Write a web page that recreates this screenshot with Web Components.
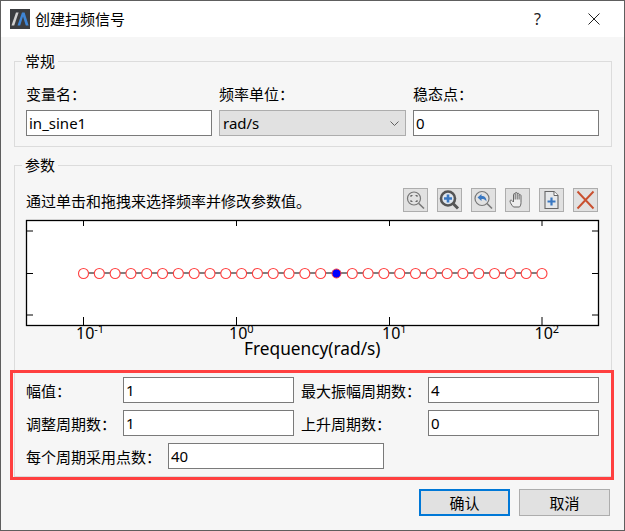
<!DOCTYPE html>
<html lang="zh">
<head>
<meta charset="utf-8">
<title>创建扫频信号</title>
<style>
  html, body { margin: 0; padding: 0; background: #fff; }
  body { font: 15px "Noto Sans", "Noto Sans CJK SC", sans-serif; color: #000; }
</style>
</head>
<body>
<sweep-dialog></sweep-dialog>
<script>
const UI_FONT = '"Noto Sans", "Noto Sans CJK SC", sans-serif';

class TitleBar extends HTMLElement {
  constructor() {
    super();
    this.attachShadow({ mode: 'open' });
  }
  connectedCallback() {
    this.shadowRoot.innerHTML = `
      <style>
        :host { display: flex; align-items: center; height: 36px; background: #fff; padding: 0 24px 0 9px; }
        svg { display: block; flex: none; }
        .name { margin-left: 5px; flex: 1; font-size: 15px; line-height: 20px; }
        .help { font-size: 16px; line-height: 20px; margin-right: 47px; color: #222; }
      </style>
      <svg width="20" height="20" viewBox="0 0 20 20">
        <rect width="20" height="20" fill="#3b3d40"/>
        <path d="M1.5 16.5 L6 3.5 H8.6 L4.2 16.5 Z" fill="#d0d0d0"/>
        <path d="M7.5 16.5 L12 3.5 H14.6 L18.6 16.5 H15.8 L13 7.6 L10.2 16.5 Z" fill="#3f86d6"/>
      </svg>
      <span class="name"><slot></slot></span>
      <span class="help">?</span>
      <svg width="12" height="12" viewBox="0 0 12 12"><path d="M.5 .5 L11.5 11.5 M11.5 .5 L.5 11.5" stroke="#222" stroke-width="1" fill="none"/></svg>
    `;
  }
}
customElements.define('title-bar', TitleBar);

class GroupBox extends HTMLElement {
  constructor() {
    super();
    this.attachShadow({ mode: 'open' });
  }
  connectedCallback() {
    this.shadowRoot.innerHTML = `
      <style>
        :host { display: block; }
        fieldset { margin: 0; border: 1px solid #dcdcdc; padding: 0 12px 0 11px; min-width: 0; }
        legend { margin-left: -4px; padding: 0 3px; font-size: 15px; line-height: 20px; }
      </style>
      <fieldset>
        <legend>${this.getAttribute('label') || ''}</legend>
        <slot></slot>
      </fieldset>
    `;
  }
}
customElements.define('group-box', GroupBox);

class TextField extends HTMLElement {
  constructor() {
    super();
    this.attachShadow({ mode: 'open' });
  }
  connectedCallback() {
    this.shadowRoot.innerHTML = `
      <style>
        :host { display: flex; align-items: center; box-sizing: border-box; height: 26px; background: #fff; border: 1px solid #7a7a7a; padding: 0 2px; font-size: 15px; white-space: nowrap; overflow: hidden; }
      </style>
      <slot></slot>
    `;
  }
}
customElements.define('text-field', TextField);

class SelectField extends HTMLElement {
  constructor() {
    super();
    this.attachShadow({ mode: 'open' });
  }
  connectedCallback() {
    this.shadowRoot.innerHTML = `
      <style>
        :host { display: flex; align-items: center; justify-content: space-between; box-sizing: border-box; height: 26px; background: #e1e1e1; border: 1px solid #adadad; padding: 0 6px 0 3px; font-size: 15px; }
        svg { display: block; }
      </style>
      <slot></slot>
      <svg width="9" height="5" viewBox="0 0 9 5"><path d="M.5 .5 L4.5 4.5 L8.5 .5" fill="none" stroke="#606060"/></svg>
    `;
  }
}
customElements.define('select-field', SelectField);

const TOOL_ICONS = {
  fit: `<circle cx="11" cy="10.5" r="6.5" fill="none" stroke="#777" stroke-width="1.2"/>
        <path d="M15.8 15.5 L21 20.5" stroke="#777" stroke-width="1.6"/>
        <path d="M8 9 V7.5 H9.5 M12.5 7.5 H14 V9 M14 12 V13.5 H12.5 M9.5 13.5 H8 V12" fill="none" stroke="#666" stroke-width="1.1"/>`,
  zoomin: `<circle cx="11" cy="10.5" r="7" fill="#dfe6ee" stroke="#555" stroke-width="2.6"/>
        <path d="M16 15.5 L21 20.5" stroke="#555" stroke-width="3"/>
        <path d="M7 10.5 H15 M11 6.5 V14.5" stroke="#3a78c2" stroke-width="2.6"/>`,
  back: `<circle cx="11" cy="10.5" r="7" fill="none" stroke="#777" stroke-width="1.2"/>
        <path d="M16 15.5 L21 20.5" stroke="#777" stroke-width="1.6"/>
        <path d="M6.5 9.5 L10.5 6 V8 C14 8 15.5 10 15.5 13.5 C14 11.5 13 11 10.5 11 V13 Z" fill="#3a78c2"/>`,
  hand: `<path d="M8.5 19 C6.5 17 5 14.5 5 13 C5 12 6.4 11.7 7.5 13 L8.5 14 V6.5 C8.5 5.3 10.2 5.3 10.2 6.5 V5.3 C10.2 4.2 12.2 4.2 12.2 5.3 V6 C12.2 5 14.1 5 14.1 6.2 V7.4 C14.1 6.4 16 6.4 16 7.6 V14.5 C16 16.5 15.4 18 14.5 19 Z M10.2 6.5 V11.5 M12.2 6 V11.5 M14.1 7.4 V11.5" fill="#eee" stroke="#666" stroke-width="1" stroke-linejoin="round"/>`,
  addfile: `<path d="M6 3.5 H15 L19 7.5 V20.5 H6 Z" fill="#e6e8ea" stroke="#666" stroke-width="1.1"/>
        <path d="M15 3.5 V7.5 H19" fill="#fff" stroke="#666" stroke-width="1"/>
        <path d="M8.5 13.5 H16.5 M12.5 9.5 V17.5" stroke="#3a78c2" stroke-width="2.2"/>`,
  close: `<path d="M4.5 3.5 L20.5 20.5 M20.5 3.5 L4.5 20.5" stroke="#c9502f" stroke-width="1.9"/>`
};

class ToolButton extends HTMLElement {
  constructor() {
    super();
    this.attachShadow({ mode: 'open' });
  }
  connectedCallback() {
    this.shadowRoot.innerHTML = `
      <style>
        :host { display: block; box-sizing: border-box; width: 25px; height: 24px; background: #e1e1e1; border: 1px solid #adadad; }
        svg { display: block; }
      </style>
      <svg width="23" height="22" viewBox="1 1 23 22">${TOOL_ICONS[this.getAttribute('icon')]}</svg>
    `;
  }
}
customElements.define('tool-button', ToolButton);

class FreqPlot extends HTMLElement {
  constructor() {
    super();
    this.attachShadow({ mode: 'open' });
  }
  connectedCallback() {
    // svg origin is the plot's top-left corner, x=26 y=220 on the page
    const left = 57.5, step = 15.81, mid = 53.5, count = 30, active = 16;
    let dots = '';
    for (let i = 0; i < count; i++) {
      const cx = left + i * step;
      dots += i === active
        ? `<circle cx="${cx}" cy="${mid}" r="4.5" fill="#0000ff" stroke="#ff4040"/>`
        : `<circle cx="${cx}" cy="${mid}" r="5" fill="#fff" stroke="#ff4040" stroke-width="1.1"/>`;
    }
    const ticksX = [57.5, 210.5, 363.5, 516];
    const expo = ['-1', '0', '1', '2'];
    let ticks = '', labels = '';
    ticksX.forEach((x, i) => {
      ticks += `<path d="M${x} 1 V6 M${x} 105 V97" />`;
      labels += `<text x="${x - 7.5}" y="119" font-size="16">10<tspan dy="-6" font-size="11">${expo[i]}</tspan></text>`;
    });
    [11, 53.5, 95].forEach(y => {
      ticks += `<path d="M1 ${y} H7 M572 ${y} H566" />`;
    });
    this.shadowRoot.innerHTML = `
      <style>
        :host { display: block; height: 157px; }
        svg { display: block; overflow: visible; }
        text { font-family: ${UI_FONT}; fill: #000; }
      </style>
      <svg width="573" height="157" viewBox="0 0 573 157">
        <rect x=".5" y=".5" width="572" height="105" fill="#fff" stroke="#000" stroke-width="1.3"/>
        <g fill="none" stroke="#000" stroke-width="1">${ticks}</g>
        <path d="M${left} 53 H${left + (count - 1) * step}" stroke="#808080" stroke-width="2"/>
        ${dots}
        ${labels}
        <text x="218" y="135" font-size="17.3">Frequency(rad/s)</text>
      </svg>
    `;
  }
}
customElements.define('freq-plot', FreqPlot);

class DialogButton extends HTMLElement {
  constructor() {
    super();
    this.attachShadow({ mode: 'open' });
  }
  connectedCallback() {
    this.shadowRoot.innerHTML = `
      <style>
        :host { display: flex; align-items: center; justify-content: center; box-sizing: border-box; width: 91px; height: 27px; background: #e1e1e1; border: 1px solid #adadad; font-size: 15px; }
        :host([primary]) { border: 2px solid #0078d7; }
      </style>
      <slot></slot>
    `;
  }
}
customElements.define('dialog-button', DialogButton);

class SweepDialog extends HTMLElement {
  constructor() {
    super();
    this.attachShadow({ mode: 'open' });
  }
  connectedCallback() {
    this.shadowRoot.innerHTML = `
      <style>
        :host { display: block; position: relative; box-sizing: border-box; width: 625px; height: 531px; border: 1px solid #5e5e5e; background: #f6f6f6; font-family: ${UI_FONT}; font-size: 15px; overflow: hidden; }
        .body { padding: 14px 12px 0 13px; display: flex; flex-direction: column; }
        .general { display: grid; grid-template-columns: 186px 187px 186px; column-gap: 7px; padding: 13px 0 10px; }
        .general .lbl { line-height: 20px; margin-bottom: 6px; }
        .params { margin-top: 8px; }
        .hint { display: flex; justify-content: space-between; align-items: center; margin-top: 13px; height: 24px; margin-bottom: 8px; }
        .tools { display: flex; gap: 9px; margin-right: 1px; }
        .amps { display: grid; grid-template-columns: 97px 171px 134px 171px; row-gap: 7px; align-items: center; padding-bottom: 7px; }
        .amps .gap { padding-left: 7px; }
        .last { grid-column: 1 / -1; display: flex; align-items: center; }
        .last span { width: 142px; }
        .last text-field { width: 216px; }
        .actions { display: flex; justify-content: flex-end; gap: 9px; margin-top: 12px; padding-right: 2px; }
        .mark { position: absolute; left: 9px; top: 369px; width: 604px; height: 110px; box-sizing: border-box; border: 3px solid #ff4040; pointer-events: none; }
      </style>
      <title-bar>创建扫频信号</title-bar>
      <div class="body">
        <group-box label="常规">
          <div class="general">
            <div class="lbl">变量名：</div>
            <div class="lbl">频率单位：</div>
            <div class="lbl">稳态点：</div>
            <text-field>in_sine1</text-field>
            <select-field>rad/s</select-field>
            <text-field>0</text-field>
          </div>
        </group-box>
        <group-box class="params" label="参数">
          <div class="hint">
            <span>通过单击和拖拽来选择频率并修改参数值。</span>
            <div class="tools">
              <tool-button icon="fit"></tool-button>
              <tool-button icon="zoomin"></tool-button>
              <tool-button icon="back"></tool-button>
              <tool-button icon="hand"></tool-button>
              <tool-button icon="addfile"></tool-button>
              <tool-button icon="close"></tool-button>
            </div>
          </div>
          <freq-plot></freq-plot>
          <div class="amps">
            <span>幅值：</span><text-field>1</text-field>
            <span class="gap">最大振幅周期数：</span><text-field>4</text-field>
            <span>调整周期数：</span><text-field>1</text-field>
            <span class="gap">上升周期数：</span><text-field>0</text-field>
            <div class="last"><span>每个周期采用点数：</span><text-field>40</text-field></div>
          </div>
        </group-box>
        <div class="actions">
          <dialog-button primary>确认</dialog-button>
          <dialog-button>取消</dialog-button>
        </div>
      </div>
      <div class="mark"></div>
    `;
  }
}
customElements.define('sweep-dialog', SweepDialog);
</script>
</body>
</html>
